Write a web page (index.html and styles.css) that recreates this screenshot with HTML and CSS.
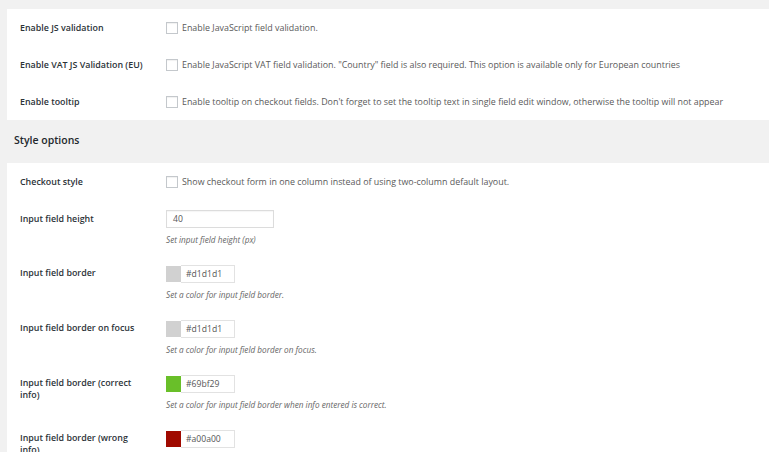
FILE: index.html
```html
<!DOCTYPE html>
<html>
<head>
<meta charset="utf-8">
<link rel="stylesheet" href="styles.css">
</head>
<body>
<div class="page">
  <section class="panel">
    <div class="row">
      <div class="label">Enable JS validation</div>
      <div class="field check-field"><span class="box"></span><span>Enable JavaScript field validation.</span></div>
    </div>
    <div class="row">
      <div class="label">Enable VAT JS Validation (EU)</div>
      <div class="field check-field"><span class="box"></span><span>Enable JavaScript VAT field validation. "Country" field is also required. This option is available only for European countries</span></div>
    </div>
    <div class="row">
      <div class="label">Enable tooltip</div>
      <div class="field check-field"><span class="box"></span><span>Enable tooltip on checkout fields. Don't forget to set the tooltip text in single field edit window, otherwise the tooltip will not appear</span></div>
    </div>
  </section>

  <h2 class="section-title">Style options</h2>

  <section class="panel">
    <div class="row">
      <div class="label">Checkout style</div>
      <div class="field check-field"><span class="box"></span><span>Show checkout form in one column instead of using two-column default layout.</span></div>
    </div>
    <div class="row">
      <div class="label">Input field height</div>
      <div class="field input-field">
        <div class="text-input">40</div>
        <p class="desc">Set input field height (px)</p>
      </div>
    </div>
    <div class="row">
      <div class="label">Input field border</div>
      <div class="field color-field">
        <div class="color"><span class="swatch swatch-grey"></span><span class="hex">#d1d1d1</span></div>
        <p class="desc">Set a color for input field border.</p>
      </div>
    </div>
    <div class="row">
      <div class="label">Input field border on focus</div>
      <div class="field color-field">
        <div class="color"><span class="swatch swatch-grey"></span><span class="hex">#d1d1d1</span></div>
        <p class="desc">Set a color for input field border on focus.</p>
      </div>
    </div>
    <div class="row">
      <div class="label">Input field border (correct info)</div>
      <div class="field color-field">
        <div class="color"><span class="swatch swatch-green"></span><span class="hex">#69bf29</span></div>
        <p class="desc">Set a color for input field border when info entered is correct.</p>
      </div>
    </div>
    <div class="row">
      <div class="label">Input field border (wrong info)</div>
      <div class="field color-field">
        <div class="color"><span class="swatch swatch-red"></span><span class="hex">#a00a00</span></div>
        <p class="desc">Set a color for input field border when info entered is wrong.</p>
      </div>
    </div>
  </section>
</div>
</body>
</html>
```

FILE: styles.css
```css
html, body {
  margin: 0;
  padding: 0;
  background: #f1f1f1;
}
body {
  font-family: "Open Sans", "Liberation Sans", sans-serif;
  color: #23282d;
  overflow: hidden;
}
.page {
  padding: 9px 0 0 7px;
}
.panel {
  background: #fff;
}
.row {
  display: grid;
  grid-template-columns: 146px 1fr;
  padding-left: 13px;
}
.label {
  font-size: 8.9px;
  font-weight: 600;
  line-height: 12px;
  padding: 13px 20px 12px 0;
  color: #2c3338;
}
.field {
  font-size: 8.9px;
  line-height: 12px;
  color: #5a5a5a;
}
.check-field {
  display: flex;
  align-items: center;
  gap: 4px;
  padding-top: 13px;
  height: 12px;
  white-space: nowrap;
}
.box {
  display: inline-block;
  width: 10px;
  height: 10px;
  border: 1px solid #c4c8cc;
  background: #fff;
  box-shadow: inset 0 1px 1px rgba(0,0,0,0.06);
  flex: none;
}
.input-field {
  padding: 10px 0 8px 0;
}
.color-field {
  padding: 11px 0 8px 0;
}
.text-input {
  box-sizing: border-box;
  width: 108px;
  height: 18px;
  border: 1px solid #dcdcdc;
  padding-left: 6px;
  line-height: 16px;
  font-size: 8.6px;
  color: #555;
  box-shadow: inset 0 1px 1px rgba(0,0,0,0.04);
}
.desc {
  margin: 6px 0 0 0;
  font-size: 8.2px;
  font-style: italic;
  line-height: 12px;
  color: #666;
}
.color {
  display: flex;
  align-items: center;
  height: 18px;
}
.swatch {
  width: 15px;
  height: 16px;
  flex: none;
}
.swatch-grey { background: #d1d1d1; }
.swatch-green { background: #69bf29; }
.swatch-red { background: #a00a00; }
.hex {
  box-sizing: border-box;
  width: 54px;
  height: 18px;
  border: 1px solid #e2e2e2;
  border-left: none;
  padding-left: 5px;
  line-height: 16px;
  font-size: 8.6px;
  color: #555;
}
.section-title {
  margin: 13px 0 16px 7px;
  font-size: 10.5px;
  line-height: 14px;
  font-weight: 600;
  color: #23282d;
}
```
